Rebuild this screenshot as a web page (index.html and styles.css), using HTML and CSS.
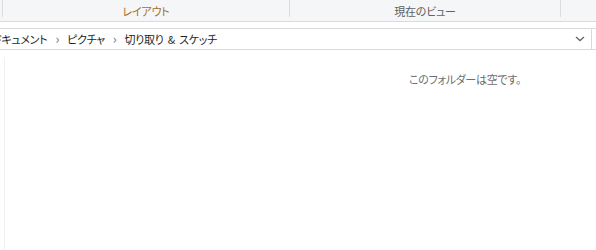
FILE: index.html
```html
<!DOCTYPE html>
<html lang="ja">
<head>
    <meta charset="UTF-8">
    <title>切り取り & スケッチ</title>
    <link rel="stylesheet" href="styles.css">
</head>
<body>

<div class="ribbon">
    <div class="group stub"></div>
    <div class="group layout"><span class="label active">レイアウト</span></div>
    <div class="group view"><span class="label">現在のビュー</span></div>
    <div class="group rest"></div>
</div>

<div class="address">
    <div class="crumbs">
        <span class="crumb">ドキュメント</span>
        <span class="sep">&rsaquo;</span>
        <span class="crumb">ピクチャ</span>
        <span class="sep">&rsaquo;</span>
        <span class="crumb">切り取り &amp; スケッチ</span>
    </div>
    <div class="dropdown">
        <svg width="10" height="6" viewBox="0 0 10 6">
            <path d="M1 1 L5 4.5 L9 1" fill="none" stroke="#6a6a6a" stroke-width="1.4"/>
        </svg>
    </div>
    <div class="search"></div>
</div>

<div class="content">
    <div class="pane">
        <p class="empty">このフォルダーは空です。</p>
    </div>
</div>

</body>
</html>
```

FILE: styles.css
```css
body {
    margin: 0;
    background: #fff;
    font-family: "Noto Sans CJK JP", "Noto Sans", sans-serif;
    font-size: 11px;
    font-feature-settings: "palt";
    color: #1e1e1e;
    overflow: hidden;
}
.ribbon {
    display: flex;
    height: 21px;
    background: #f5f6f7;
    border-bottom: 1px solid #dadbdc;
}
.group {
    height: 17px;
    border-left: 1px solid #dcdddf;
    display: flex;
    align-items: center;
    justify-content: center;
}
.stub {
    width: 2px;
    border-left: none;
}
.layout {
    width: 286px;
}
.view {
    width: 270px;
}
.rest {
    flex: 1;
}
.label {
    color: #606060;
    padding-top: 4px;
    letter-spacing: -0.2px;
}
.label.active {
    color: #a3702f;
}
.address {
    display: flex;
    align-items: center;
    height: 20px;
    margin-top: 6px;
    border-top: 1px solid #d9d9d9;
    border-bottom: 1px solid #d9d9d9;
}
.crumbs {
    flex: 1;
    display: flex;
    align-items: center;
    margin-left: -7px;
    white-space: nowrap;
    letter-spacing: -0.3px;
}
.crumb {
    word-spacing: 2px;
}
.sep {
    color: #7a7a7a;
    font-size: 13px;
    margin: -2px 8px 0;
}
.dropdown {
    width: 22px;
    display: flex;
    justify-content: center;
}
.search {
    width: 4px;
    height: 20px;
    border-left: 1px solid #d9d9d9;
}
.content {
    padding-top: 7px;
}
.pane {
    margin-left: 4px;
    height: 200px;
    border-left: 1px solid #f0f0f0;
}
.empty {
    margin: 0;
    padding: 14px 0 0 404px;
    color: #6d6d6d;
    letter-spacing: -0.3px;
}
```
